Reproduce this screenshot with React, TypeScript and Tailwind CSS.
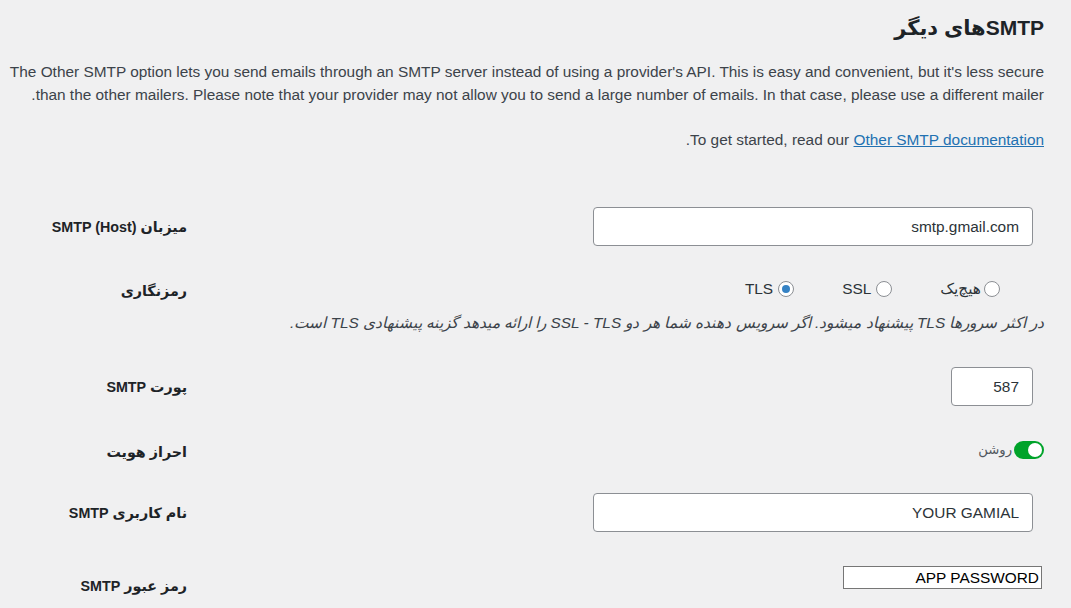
import React from "react";

function Radio({ checked }: { checked?: boolean }) {
  return (
    <span className="relative inline-flex h-[16px] w-[16px] shrink-0 items-center justify-center rounded-full border border-[#8c8f94] bg-white">
      {checked && <span className="h-[8px] w-[8px] rounded-full bg-[#3582c4]" />}
    </span>
  );
}

function Row({ label, className, children }: { label: string; className: string; children: React.ReactNode }) {
  return (
    <div dir="ltr" className={"flex " + className}>
      <div
        dir="rtl"
        className="w-[177px] shrink-0 pt-[10px] text-right text-[14.3px] font-bold leading-[20px] text-[#1d2327]"
      >
        {label}
      </div>
      <div dir="rtl" className="min-w-0 flex-1">
        {children}
      </div>
    </div>
  );
}

export default function App() {
  return (
    <div
      dir="rtl"
      className="min-h-screen bg-[#f0f0f1] pl-[10px] pr-[27px] pt-[14px] font-['Liberation_Sans','DejaVu_Sans',sans-serif] text-[#3c434a]"
    >
      <h2 className="text-[21px] font-bold leading-[28px] text-[#1d2327]">SMTPهای دیگر</h2>
      <p className="ml-[-6px] mt-[18px] text-[15.4px] leading-[23px] text-[#3c434a]">
        The Other SMTP option lets you send emails through an SMTP server instead of using a provider's API. This is easy and convenient, but it's less secure than the other mailers. Please note that your provider may not allow you to send a large number of emails. In that case, please use a different mailer.
      </p>
      <p className="mt-[22px] text-[15.4px] leading-[23px] text-[#3c434a]">
        To get started, read our{" "}
        <a href="#" className="text-[#2271b1] underline">
          Other SMTP documentation
        </a>
        .
      </p>

      <Row label="میزبان SMTP (Host)" className="mt-[56px]">
        <input
          readOnly
          value="smtp.gmail.com"
          className="mr-[11px] h-[39px] w-[440px] rounded-[4px] border border-[#8c8f94] bg-white px-[13px] text-[15.4px] text-[#2c3338] outline-none"
        />
      </Row>

      <Row label="رمزنگاری" className="mt-[25px]">
        <div className="mr-[44px] flex h-[36px] items-center gap-[48px] text-[15.4px] text-[#2c3338]">
          <label className="flex items-center gap-[3px]">
            <Radio />
            <span>هیچ‌یک</span>
          </label>
          <label className="flex items-center gap-[5px]">
            <Radio />
            <span>SSL</span>
          </label>
          <label className="flex items-center gap-[5px]">
            <Radio checked />
            <span>TLS</span>
          </label>
        </div>
        <p className="mt-[6px] text-[15.4px] italic leading-[20px] text-[#3c434a]">
          در اکثر سرورها TLS پیشنهاد میشود. اگر سرویس دهنده شما هر دو SSL - TLS را ارائه میدهد گزینه پیشنهادی TLS است.
        </p>
      </Row>

      <Row label="پورت SMTP" className="mt-[34px]">
        <input
          readOnly
          value="587"
          className="mr-[11px] h-[39px] w-[82px] rounded-[4px] border border-[#8c8f94] bg-white px-[13px] text-[15.4px] text-[#2c3338] outline-none"
        />
      </Row>

      <Row label="احراز هویت" className="mt-[26px]">
        <div className="flex h-[36px] items-center gap-[2px]">
          <span className="relative inline-flex h-[18px] w-[30px] shrink-0 items-center rounded-full bg-[#00a32a]">
            <span className="absolute right-[2px] top-[2px] h-[14px] w-[14px] rounded-full bg-white" />
          </span>
          <span className="text-[13.2px] text-[#50575e]">روشن</span>
        </div>
      </Row>

      <Row label="نام کاربری SMTP" className="mt-[25px]">
        <input
          readOnly
          value="YOUR GAMIAL"
          className="mr-[11px] h-[39px] w-[440px] rounded-[4px] border border-[#8c8f94] bg-white px-[13px] text-[15.4px] text-[#2c3338] outline-none"
        />
      </Row>

      <Row label="رمز عبور SMTP" className="mt-[34px]">
        <input
          readOnly
          value="APP PASSWORD"
          className="mr-[2px] h-[23px] w-[199px] border border-[#767676] bg-white px-[2px] text-[15.4px] text-black outline-none"
        />
      </Row>
    </div>
  );
}
